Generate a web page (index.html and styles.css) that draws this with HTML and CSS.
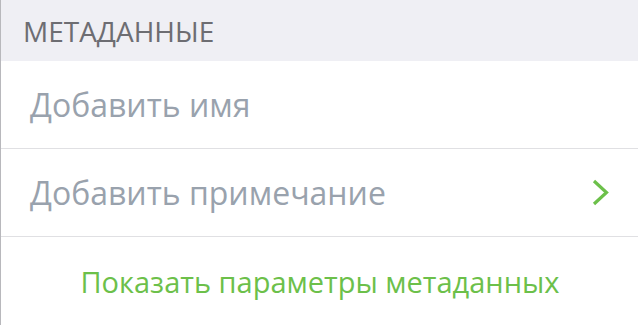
FILE: index.html
```html
<!DOCTYPE html>
<html lang="ru">
<head>
    <meta charset="UTF-8">
    <meta name="viewport" content="width=device-width, initial-scale=1.0">
    <title>Метаданные</title>
    <link rel="stylesheet" href="styles.css">
</head>
<body>
    <div class="screen">
        <div class="section-header">МЕТАДАННЫЕ</div>
        <div class="list">
            <div class="list-row">
                <span class="placeholder">Добавить имя</span>
            </div>
            <div class="list-row">
                <span class="placeholder">Добавить примечание</span>
                <svg class="chevron" width="18" height="27" viewBox="0 0 18 27">
                    <path d="M2 2 L14.5 13.5 L2 25" fill="none" stroke="#6cc04a" stroke-width="3.2"/>
                </svg>
            </div>
            <div class="list-row action-row">
                <span class="action">Показать параметры метаданных</span>
            </div>
        </div>
    </div>
</body>
</html>
```

FILE: styles.css
```css
body {
    margin: 0;
    font-family: "Open Sans", Roboto, sans-serif;
    background-color: #fff;
}
.screen {
    width: 638px;
    height: 325px;
    border-left: 1px solid #b8b8bc;
    box-sizing: border-box;
    overflow: hidden;
}
.section-header {
    height: 61px;
    background-color: #efeff4;
    color: #6d6d72;
    font-size: 28px;
    padding: 18px 0 0 22px;
    box-sizing: border-box;
    line-height: 26px;
}
.list-row {
    height: 88px;
    display: flex;
    align-items: center;
    padding: 0 28px 0 29px;
    border-bottom: 1px solid #e0e0e3;
    box-sizing: border-box;
}
.list-row:last-child {
    border-bottom: none;
}
.placeholder {
    flex: 1;
    color: #99a2ad;
    font-size: 32px;
}
.chevron {
    display: block;
}
.action-row {
    justify-content: center;
}
.action {
    color: #6cc04a;
    font-size: 29px;
}
```
